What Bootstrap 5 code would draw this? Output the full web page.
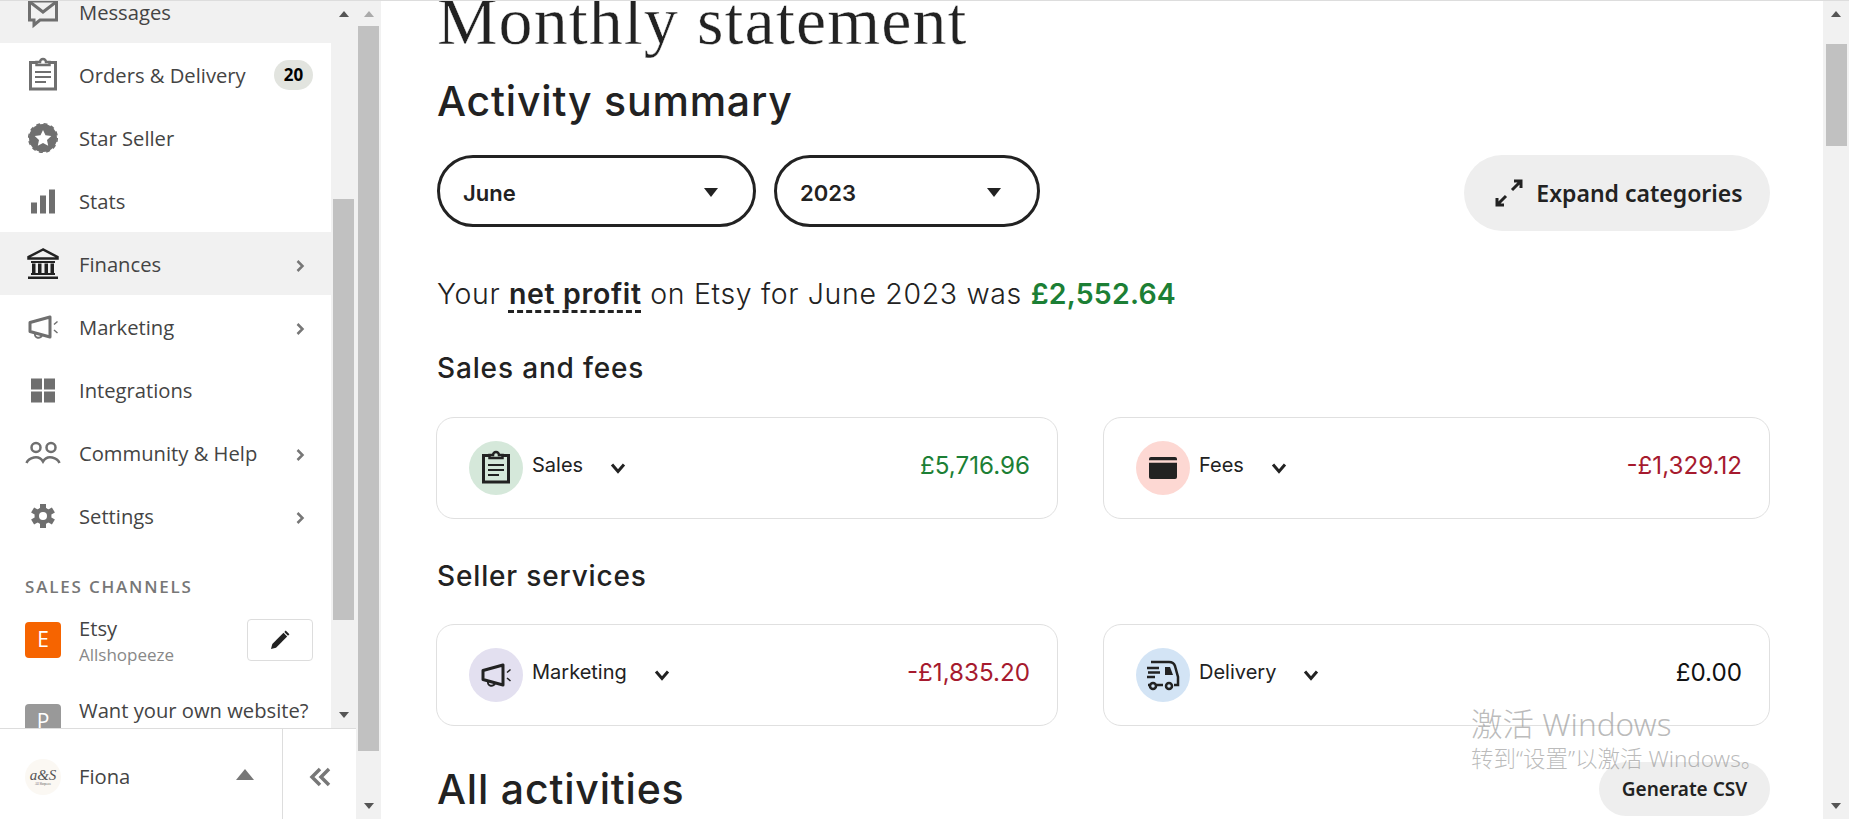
<!DOCTYPE html>
<html lang="en">
<head>
<meta charset="utf-8">
<title>Monthly statement</title>
<link href="https://cdn.jsdelivr.net/npm/bootstrap@5.3.0/dist/css/bootstrap.min.css" rel="stylesheet">
<style>
html,body{height:819px;overflow:hidden;background:#fff}
body{border-top:1px solid #ddd;font-family:"Open Sans","Liberation Sans",sans-serif;color:#222;position:relative}
.shell{height:818px}
/* sidebar */
.side{width:356px;flex:none}
.side-top{height:727px;overflow:hidden;background:#f1f1f1}
.side-list{width:331px;flex:none;overflow:hidden;background:#fff}
.nav-stack{margin-top:-21px}
.nav-rowx{height:63px;padding:0 18px 0 25px;gap:18px;color:#444;font-size:20.2px;background:#fff}
.nav-rowx.is-grey{background:#f1f1f1}
.nav-rowx .ico{width:36px;height:36px;flex:none;color:#6f6f6f}
.nav-rowx.is-dark .ico{color:#222}
.nav-rowx .chev{width:9px;height:14px;color:#777;margin:4px 8px 0 auto;flex:none}
.nav-text{margin-top:1px}
.count-pill{margin-left:auto;width:39px;height:30px;border-radius:15px;background:#e2e4df;color:#000;font-weight:700;font-size:17px}
.chan-title{margin:28px 0 0 25px;font-size:17px;line-height:24px;font-weight:600;letter-spacing:1.8px;color:#777}
.chan-row{padding:0 18px 0 25px;gap:18px;font-size:20.2px;color:#444}
.chan-sq{width:36px;height:36px;border-radius:4px;color:#fff;font-size:21px;flex:none;margin-top:6px}
.chan-sq.etsy{background:#f66400}
.chan-sq.plain{background:#999}
.chan-name{line-height:26px;margin:-1px 0 1px}
.chan-sub{font-size:17px;line-height:26px;color:#888}
.edit-box{width:66px;height:42px;border:1px solid #ddd;border-radius:4px;margin:3px 0 0 auto;color:#222;background:#fff;padding:0}
.chan-a{height:82px;margin-top:17px}
.side-foot{height:91px;border-top:1px solid #ddd;background:#fff}
.foot-user{width:283px;padding:5px 28px 0 25px;gap:18px;font-size:20.2px;color:#444;border-right:1px solid #ddd}
.avatar-dot{width:36px;height:36px;border-radius:50%;background:#fbf8f3;font-family:"Liberation Serif",serif;font-style:italic;font-size:15px;line-height:14px;color:#555;flex:none}
.tiny-brand{font-size:3px;line-height:4px;font-style:normal}
.foot-caret{margin:0 0 5px auto;width:0;height:0;border-left:9px solid transparent;border-right:9px solid transparent;border-bottom:11px solid #777}
.foot-collapse{flex:1;color:#777;padding-top:5px}
/* scrollbars */
.vbar{background:#f1f1f1;flex:none}
.vbar-inner{width:25px;height:727px}
.vbar-outer{width:25px;height:818px;margin-right:1px}
.vbar-page{width:26px;height:818px}
.arrow-up,.arrow-down{width:0;height:0;border-left:5.5px solid transparent;border-right:5.5px solid transparent}
.arrow-up{border-bottom:6px solid #555;margin-top:10px}
.arrow-up.faint{border-bottom-color:#aaa}
.arrow-down{border-top:6px solid #555;margin:auto 0 10px}
.thumbx{width:21px;background:#c1c1c1}
.thumb-inner{height:421px;margin-top:182px}
.thumb-outer{height:725px;margin-top:9px}
.thumb-page{height:102px;margin-top:27px}
/* main */
.main-pane{flex:1;min-width:0;overflow:hidden;padding:0 53px 0 54px}
.stmt-title{margin:-12px 0 24px 1px;font-family:"Liberation Serif",serif;font-weight:400;font-size:68px;line-height:64px;letter-spacing:1.1px;color:#222;-webkit-text-stroke:.4px #fff}
.h-big{font-family:Inter,sans-serif;font-weight:500;font-size:41px;line-height:48px;letter-spacing:.8px;margin:0 0 30px 1px;color:#222}
.pick-pill{height:72px;border:3px solid #222;border-radius:36px;background:#fff;font-family:Inter,sans-serif;font-weight:600;font-size:22px;color:#222;padding:4px 35px 0 23px}
.pick-pill:hover,.pick-pill:active{border-color:#222;background:#fff;color:#222}
.pick-month{width:319px;margin-left:1px}
.pick-year{width:266px;margin-left:18px;padding-right:36px}
.caret-down{width:0;height:0;border-left:7px solid transparent;border-right:7px solid transparent;border-top:9px solid #222;margin-top:-2px}
.soft-pill{background:#eee;border:0;color:#222;font-family:"Noto Sans",sans-serif;font-weight:600;border-radius:40px}
.soft-pill:hover{background:#eee;color:#222}
.expand-btn{height:76px;width:306px;font-size:23px;gap:13px;padding:0 8px 0 12px}
.net-line{margin:45px 0 0 1px;font-family:Inter,sans-serif;font-weight:300;font-size:28.5px;line-height:35px;letter-spacing:.65px;color:#222}
.net-line b{font-weight:600;text-decoration:underline dashed #222 3px;text-underline-offset:6px}
.net-line em{font-style:normal;font-weight:600;color:#1c7f35;letter-spacing:.2px}
.h-mid{font-family:Inter,sans-serif;font-weight:500;font-size:28px;line-height:36px;letter-spacing:.85px;margin:39px 0 31px 1px;color:#222}
.h-mid.h-next{margin:39px 0 30px 1px}
.sum-grid{display:grid;grid-template-columns:622px 667px;gap:45px}
.sum-card{height:102px;flex-direction:row;align-items:center;border:1.5px solid #e0e0e0;border-radius:18px;padding:0 27px 0 32px;font-family:Inter,sans-serif;background:#fff}
.disc{width:54px;height:54px;border-radius:50%;flex:none;color:#222}
.disc-green{background:#d5e8da}.disc-red{background:#fdd8d3}.disc-purple{background:#e3e0f0}.disc-blue{background:#d3e4f5}
.sum-label{font-size:20px;margin:-7px 0 0 9px;color:#222}
.sum-chev{width:16px;height:12px;margin-left:27px;color:#222}
.sum-amt{margin:-4px 0 0 auto;font-size:24.2px;font-weight:400}
.amt-plus{color:#1c7f35}.amt-minus{color:#a61a2e}.amt-zero{color:#111}
.foot-row{margin-top:36px}
.foot-row .h-big{margin:3px 0 0 1px}
.csv-btn{height:54px;width:171px;font-size:19px}
.watermark{position:absolute;left:1471px;top:702px;color:rgba(120,120,120,.5);pointer-events:none;font-family:"Noto Sans","Noto Sans CJK SC",sans-serif;font-weight:300}
.wm-one{font-size:31.5px;line-height:42px}
.wm-two{font-size:22.5px;line-height:28px}
</style>
</head>
<body>
<svg width="0" height="0" class="d-none" aria-hidden="true">
  <symbol id="i-msg" viewBox="0 0 36 36"><path d="M4.500 7h27v19H15l-6 5v-5H4.500Z" fill="none" stroke="currentColor" stroke-width="3"/><path d="M5 8l13 10L31 8" fill="none" stroke="currentColor" stroke-width="3"/></symbol>
  <symbol id="i-clip" viewBox="0 0 36 36"><path d="M12 5.500H5.500V32h25V5.500H24" fill="none" stroke="currentColor" stroke-width="3"/><path d="M11.500 8V5h3.500a3 3 0 0 1 6 0h3.500v3Z" fill="none" stroke="currentColor" stroke-width="2.500"/><path d="M10 15h16M10 20h16M10 25h11" stroke="currentColor" stroke-width="2"/></symbol>
  <symbol id="i-star" viewBox="0 0 36 36"><circle cx="18" cy="18" r="14" fill="currentColor"/><circle cx="18" cy="18" r="14.300" fill="none" stroke="currentColor" stroke-width="1.500" stroke-dasharray="4 3.500"/><path d="M18 10l2.500 5.300 5.800.7-4.300 4 1.200 5.800-5.200-2.900-5.200 2.900 1.200-5.800-4.300-4 5.800-.7Z" fill="#fff"/></symbol>
  <symbol id="i-bars" viewBox="0 0 36 36"><path d="M6 19.500h6v11H6ZM15 12.500h6v18h-6ZM24 6.500h6v24h-6Z" fill="currentColor"/></symbol>
  <symbol id="i-bank" viewBox="0 0 36 36"><path d="M18 3.500 3.500 11v1.500h29V11Z" fill="none" stroke="currentColor" stroke-width="2.500"/><path d="M6 15h24v2H6ZM7 17.500h3.500V27H7ZM13 17.500h3.500V27H13ZM19.500 17.500H23V27h-3.500ZM25.500 17.500H29V27h-3.500ZM6 27h24v2H6ZM3 30.500h30V33H3Z" fill="currentColor"/></symbol>
  <symbol id="i-horn" viewBox="0 0 36 36"><path d="M5 13.500 25 8v20L5 22.500Z" fill="none" stroke="currentColor" stroke-width="3" stroke-linejoin="round"/><path d="M10 24.500a3.500 3.500 0 0 0 7 1.500" fill="none" stroke="currentColor" stroke-width="2"/><path d="M29 15.500l3.500-3M29 21l3.500 3" stroke="currentColor" stroke-width="1.500"/></symbol>
  <symbol id="i-grid" viewBox="0 0 36 36"><path d="M6 6.500h11v11H6ZM19 6.500h11v11H19ZM6 19.500h11v11H6ZM19 19.500h11v11H19Z" fill="currentColor"/></symbol>
  <symbol id="i-people" viewBox="0 0 36 36"><circle cx="11" cy="12.500" r="4.500" fill="none" stroke="currentColor" stroke-width="2.500"/><circle cx="26" cy="12.500" r="4.500" fill="none" stroke="currentColor" stroke-width="2.500"/><path d="M1.500 28c2-5 12-9 16.500-1.500C22.500 19 32.500 23 34.500 28" fill="none" stroke="currentColor" stroke-width="2.500"/></symbol>
  <symbol id="i-gear" viewBox="0 0 36 36"><circle cx="18" cy="18" r="8.500" fill="currentColor"/><path d="M18 6v24M7.600 12l20.800 12M7.600 24l20.800-12" stroke="currentColor" stroke-width="6"/><circle cx="18" cy="18" r="4" fill="#fff"/></symbol>
  <symbol id="i-chevr" viewBox="0 0 9 14"><path d="M1.500 2 6.500 7l-5 5" fill="none" stroke="currentColor" stroke-width="2.500"/></symbol>
  <symbol id="i-chevd" viewBox="0 0 16 12"><path d="M2 2.500 8 9.500l6-7" fill="none" stroke="currentColor" stroke-width="3"/></symbol>
  <symbol id="i-card" viewBox="0 0 36 36"><rect x="4" y="7" width="28" height="22" rx="2" fill="currentColor"/><path d="M4 11.500h28" stroke="#fdd8d3" stroke-width="2.500"/></symbol>
  <symbol id="i-truck" viewBox="0 0 36 36"><path d="M6 5h18c3 0 5 1 6 4l3 11v8h-4M11 28h7M3 28h2" fill="none" stroke="currentColor" stroke-width="2.500"/><path d="M20 10h5l3 8h-8Z" fill="currentColor"/><path d="M2 11h12M3 15.500h12M2 20h8" stroke="currentColor" stroke-width="2.500"/><circle cx="8" cy="29" r="3" fill="none" stroke="currentColor" stroke-width="2.500"/><circle cx="24" cy="29" r="3" fill="none" stroke="currentColor" stroke-width="2.500"/></symbol>
</svg>

<div class="shell d-flex">
  <aside class="side d-flex flex-column">
    <div class="side-top d-flex">
      <div class="side-list">
        <div class="nav-stack">
          <div class="nav-rowx is-grey d-flex align-items-center"><svg class="ico"><use href="#i-msg"/></svg><span class="nav-text">Messages</span></div>
          <div class="nav-rowx d-flex align-items-center"><svg class="ico"><use href="#i-clip"/></svg><span class="nav-text">Orders &amp; Delivery</span><span class="count-pill d-flex align-items-center justify-content-center">20</span></div>
          <div class="nav-rowx d-flex align-items-center"><svg class="ico"><use href="#i-star"/></svg><span class="nav-text">Star Seller</span></div>
          <div class="nav-rowx d-flex align-items-center"><svg class="ico"><use href="#i-bars"/></svg><span class="nav-text">Stats</span></div>
          <div class="nav-rowx is-grey is-dark d-flex align-items-center"><svg class="ico"><use href="#i-bank"/></svg><span class="nav-text">Finances</span><svg class="chev"><use href="#i-chevr"/></svg></div>
          <div class="nav-rowx d-flex align-items-center"><svg class="ico"><use href="#i-horn"/></svg><span class="nav-text">Marketing</span><svg class="chev"><use href="#i-chevr"/></svg></div>
          <div class="nav-rowx d-flex align-items-center"><svg class="ico"><use href="#i-grid"/></svg><span class="nav-text">Integrations</span></div>
          <div class="nav-rowx d-flex align-items-center"><svg class="ico"><use href="#i-people"/></svg><span class="nav-text">Community &amp; Help</span><svg class="chev"><use href="#i-chevr"/></svg></div>
          <div class="nav-rowx d-flex align-items-center"><svg class="ico"><use href="#i-gear"/></svg><span class="nav-text">Settings</span><svg class="chev"><use href="#i-chevr"/></svg></div>
          <div class="chan-title">SALES CHANNELS</div>
          <div class="chan-row chan-a d-flex">
            <span class="chan-sq etsy d-flex align-items-center justify-content-center">E</span>
            <div><div class="chan-name">Etsy</div><div class="chan-sub">Allshopeeze</div></div>
            <button class="edit-box btn d-flex align-items-center justify-content-center" type="button"><svg width="20" height="20" viewBox="0 0 20 20"><path d="M1 19l1.300-5L13.500 2.800l3.700 3.700L6 17.700Z" fill="currentColor"/><path d="M15 1.300l3.700 3.700" stroke="currentColor" stroke-width="2"/></svg></button>
          </div>
          <div class="chan-row d-flex">
            <span class="chan-sq plain d-flex align-items-center justify-content-center">P</span>
            <div class="chan-name">Want your own website?</div>
          </div>
        </div>
      </div>
      <div class="vbar vbar-inner d-flex flex-column align-items-center">
        <span class="arrow-up"></span>
        <span class="thumbx thumb-inner"></span>
        <span class="arrow-down"></span>
      </div>
    </div>
    <div class="side-foot d-flex">
      <div class="foot-user d-flex align-items-center">
        <span class="avatar-dot d-flex flex-column align-items-center justify-content-center"><span>a&amp;S</span><span class="tiny-brand">All Shopeeze</span></span>
        <span>Fiona</span>
        <span class="foot-caret"></span>
      </div>
      <div class="foot-collapse d-flex align-items-center justify-content-center">
        <svg width="22" height="20" viewBox="0 0 22 20"><path d="M11 2 3 10l8 8M20 2l-8 8 8 8" fill="none" stroke="currentColor" stroke-width="3.500"/></svg>
      </div>
    </div>
  </aside>
  <div class="vbar vbar-outer d-flex flex-column align-items-center">
    <span class="arrow-up faint"></span>
    <span class="thumbx thumb-outer"></span>
    <span class="arrow-down"></span>
  </div>

  <main class="main-pane">
    <h1 class="stmt-title">Monthly statement</h1>
    <h2 class="h-big">Activity summary</h2>
    <div class="d-flex align-items-start">
      <button type="button" class="btn pick-pill pick-month d-flex align-items-center justify-content-between"><span>June</span><span class="caret-down"></span></button>
      <button type="button" class="btn pick-pill pick-year d-flex align-items-center justify-content-between"><span>2023</span><span class="caret-down"></span></button>
      <button type="button" class="btn soft-pill expand-btn ms-auto d-flex align-items-center justify-content-center">
        <svg width="28" height="28" viewBox="0 0 28 28"><path d="M17 11l9-9M19 2h7v7M11 17l-9 9M2 19v7h7" fill="none" stroke="currentColor" stroke-width="3"/></svg>
        <span>Expand categories</span>
      </button>
    </div>
    <p class="net-line">Your <b>net profit</b> on Etsy for June 2023 was <em>£2,552.64</em></p>
    <h3 class="h-mid">Sales and fees</h3>
    <div class="sum-grid">
      <div class="card sum-card"><span class="disc disc-green d-flex align-items-center justify-content-center"><svg width="36" height="36"><use href="#i-clip"/></svg></span><span class="sum-label">Sales</span><svg class="sum-chev"><use href="#i-chevd"/></svg><span class="sum-amt amt-plus">£5,716.96</span></div>
      <div class="card sum-card"><span class="disc disc-red d-flex align-items-center justify-content-center"><svg width="36" height="36"><use href="#i-card"/></svg></span><span class="sum-label">Fees</span><svg class="sum-chev"><use href="#i-chevd"/></svg><span class="sum-amt amt-minus">-£1,329.12</span></div>
    </div>
    <h3 class="h-mid h-next">Seller services</h3>
    <div class="sum-grid">
      <div class="card sum-card"><span class="disc disc-purple d-flex align-items-center justify-content-center"><svg width="36" height="36"><use href="#i-horn"/></svg></span><span class="sum-label">Marketing</span><svg class="sum-chev"><use href="#i-chevd"/></svg><span class="sum-amt amt-minus">-£1,835.20</span></div>
      <div class="card sum-card"><span class="disc disc-blue d-flex align-items-center justify-content-center"><svg width="36" height="36"><use href="#i-truck"/></svg></span><span class="sum-label">Delivery</span><svg class="sum-chev"><use href="#i-chevd"/></svg><span class="sum-amt amt-zero">£0.00</span></div>
    </div>
    <div class="foot-row d-flex align-items-start justify-content-between">
      <h2 class="h-big">All activities</h2>
      <button type="button" class="btn soft-pill csv-btn">Generate CSV</button>
    </div>
  </main>

  <div class="vbar vbar-page d-flex flex-column align-items-center">
    <span class="arrow-up"></span>
    <span class="thumbx thumb-page"></span>
    <span class="arrow-down"></span>
  </div>
</div>

<div class="watermark">
  <div class="wm-one">激活 Windows</div>
  <div class="wm-two">转到“设置”以激活 Windows。</div>
</div>
<script src="https://cdn.jsdelivr.net/npm/bootstrap@5.3.0/dist/js/bootstrap.bundle.min.js"></script>
</body>
</html>
